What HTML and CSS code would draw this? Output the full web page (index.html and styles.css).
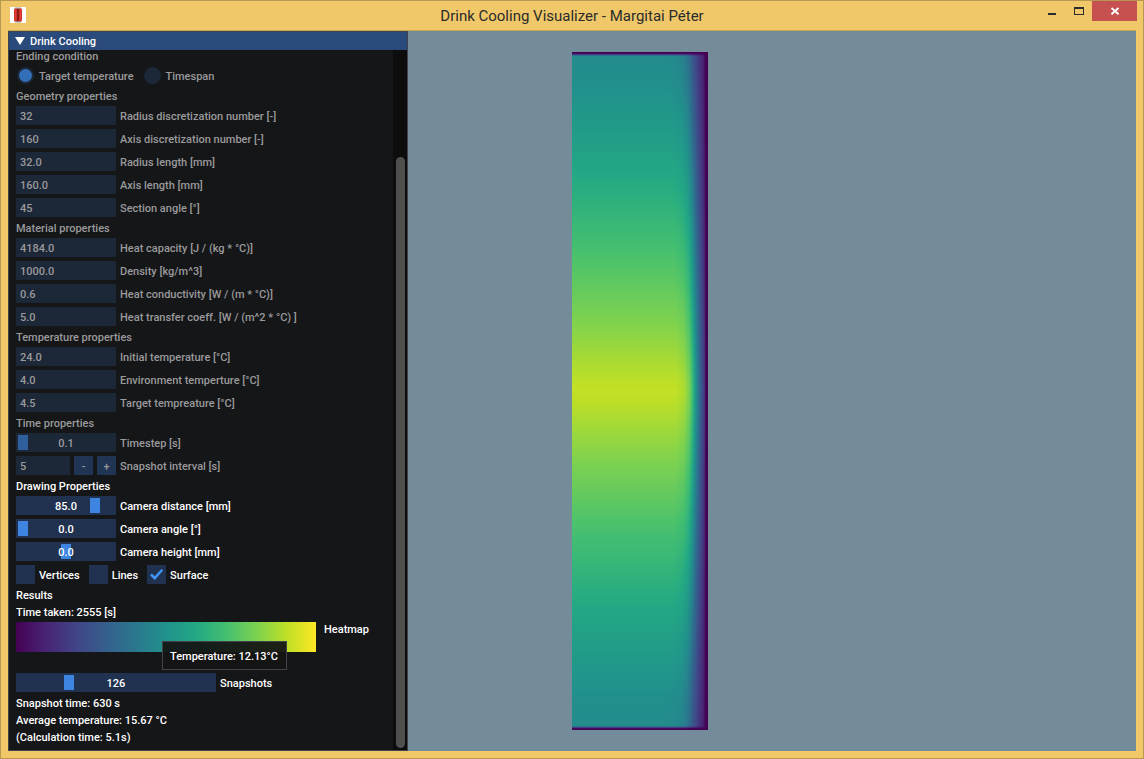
FILE: index.html
```html
<!DOCTYPE html>
<html lang="en">
<head>
<meta charset="utf-8">
<title>Drink Cooling Visualizer - Margitai Péter</title>
<link rel="stylesheet" href="styles.css">
</head>
<body>
<div class="window">
  <header class="titlebar">
    <svg class="app-icon" viewBox="0 0 16 16" aria-hidden="true">
      <rect width="16" height="16" fill="#fff"/>
      <rect x="4" y="1" width="8" height="14" rx="2" fill="#c9342b"/>
      <rect x="5" y="0.5" width="6" height="1.2" fill="#9a9a92"/>
      <rect x="5" y="14.3" width="6" height="1.2" fill="#9a9a92"/>
      <rect x="7" y="2" width="2" height="12" fill="#8f1712"/>
      <rect x="5" y="2" width="1" height="12" fill="#e8392f"/>
      <rect x="10" y="2" width="1" height="12" fill="#e8392f"/>
    </svg>
    <h1 class="window-title">Drink Cooling Visualizer - Margitai Péter</h1>
    <div class="window-buttons">
      <button class="win-btn" type="button" aria-label="Minimize"><svg viewBox="0 0 12 12"><rect x="2" y="8" width="8" height="2" fill="#2b2b2b"/></svg></button>
      <button class="win-btn" type="button" aria-label="Maximize"><svg viewBox="0 0 12 12" shape-rendering="crispEdges"><path d="M1 2h10v8H1zM2 4v5h8V4z" fill="#2b2b2b" fill-rule="evenodd"/></svg></button>
      <button class="win-btn close" type="button" aria-label="Close"><svg viewBox="0 0 12 12"><path d="M2.500 3L9.500 9.200M9.500 3L2.500 9.200" stroke="#fff" stroke-width="1.900"/></svg></button>
    </div>
  </header>
  <main class="client">
    <section class="panel">
      <h2 class="panel-title"><svg class="arrow" viewBox="0 0 10 8" aria-hidden="true"><path d="M0 0h10L5 8z" fill="#fff"/></svg>Drink Cooling</h2>
      <div class="panel-body">
        <form class="content">
          <fieldset class="group" disabled>
            <h3 class="line">Ending condition</h3>
            <div class="choices">
              <label class="choice"><input class="radio" type="radio" name="ending" checked><span>Target temperature</span></label>
              <label class="choice"><input class="radio" type="radio" name="ending"><span>Timespan</span></label>
            </div>
            <h3 class="line">Geometry properties</h3>
            <div class="row"><input class="field" id="rn" value="32"><label for="rn">Radius discretization number [-]</label></div>
            <div class="row"><input class="field" id="an" value="160"><label for="an">Axis discretization number [-]</label></div>
            <div class="row"><input class="field" id="rl" value="32.0"><label for="rl">Radius length [mm]</label></div>
            <div class="row"><input class="field" id="al" value="160.0"><label for="al">Axis length [mm]</label></div>
            <div class="row"><input class="field" id="sa" value="45"><label for="sa">Section angle [°]</label></div>
            <h3 class="line">Material properties</h3>
            <div class="row"><input class="field" id="hc" value="4184.0"><label for="hc">Heat capacity [J / (kg * °C)]</label></div>
            <div class="row"><input class="field" id="de" value="1000.0"><label for="de">Density [kg/m^3]</label></div>
            <div class="row"><input class="field" id="co" value="0.6"><label for="co">Heat conductivity [W / (m * °C)]</label></div>
            <div class="row"><input class="field" id="tc" value="5.0"><label for="tc">Heat transfer coeff. [W / (m^2 * °C) ]</label></div>
            <h3 class="line">Temperature properties</h3>
            <div class="row"><input class="field" id="it" value="24.0"><label for="it">Initial temperature [°C]</label></div>
            <div class="row"><input class="field" id="et" value="4.0"><label for="et">Environment temperture [°C]</label></div>
            <div class="row"><input class="field" id="tt" value="4.5"><label for="tt">Target tempreature [°C]</label></div>
            <h3 class="line">Time properties</h3>
            <div class="row"><span class="slider"><input class="range" id="ts" type="range" min="0.1" max="10" step="0.1" value="0.1"><output for="ts">0.1</output></span><label for="ts">Timestep [s]</label></div>
            <div class="row"><span class="stepper"><input class="field" id="si" value="5"><button class="step" type="button" aria-label="Decrease">-</button><button class="step" type="button" aria-label="Increase">+</button></span><label for="si">Snapshot interval [s]</label></div>
          </fieldset>
          <fieldset class="group">
            <h3 class="line">Drawing Properties</h3>
            <div class="row"><span class="slider"><input class="range" id="cd" type="range" min="10" max="100" value="85"><output for="cd">85.0</output></span><label for="cd">Camera distance [mm]</label></div>
            <div class="row"><span class="slider"><input class="range" id="ca" type="range" min="0" max="360" value="0"><output for="ca">0.0</output></span><label for="ca">Camera angle [°]</label></div>
            <div class="row"><span class="slider"><input class="range" id="ch" type="range" min="-100" max="100" value="0"><output for="ch">0.0</output></span><label for="ch">Camera height [mm]</label></div>
            <div class="choices">
              <label class="choice"><input class="check" type="checkbox"><span>Vertices</span></label>
              <label class="choice"><input class="check" type="checkbox"><span>Lines</span></label>
              <label class="choice"><input class="check" type="checkbox" checked><span>Surface</span></label>
            </div>
          </fieldset>
          <section class="group">
            <h3 class="line">Results</h3>
            <p class="line">Time taken: 2555 [s]</p>
            <div class="heatmap-row">
              <div class="heatmap"><div class="tooltip" role="tooltip">Temperature: 12.13°C</div></div>
              <span class="line">Heatmap</span>
            </div>
            <div class="row snapshots"><span class="slider wide"><input class="range" id="sn" type="range" min="0" max="511" value="126"><output for="sn">126</output></span><label for="sn">Snapshots</label></div>
            <p class="line">Snapshot time: 630 s</p>
            <p class="line">Average temperature: 15.67 °C</p>
            <p class="line">(Calculation time: 5.1s)</p>
          </section>
        </form>
        <div class="scrollbar"><div class="thumb"></div></div>
      </div>
    </section>
    <section class="viewport">
      <canvas class="section-plot" id="plot" width="136" height="678"></canvas>
    </section>
  </main>
</div>
<script src="plot.js"></script>
</body>
</html>
```
FILE: styles.css
```css
* { box-sizing: border-box; }

body {
  margin: 0;
  font: 500 11px/13px Roboto, "Liberation Sans", sans-serif;
  color: #fff;
}

h1, h2, h3, p, fieldset { margin: 0; padding: 0; border: 0; font: inherit; min-width: 0; }

.window {
  display: flex;
  flex-direction: column;
  min-height: 100vh;
  padding: 0 7px 7px;
  background: #f0c869;
  border: 1px solid #b79850;
}

.titlebar {
  display: grid;
  grid-template-columns: 1fr auto 1fr;
  align-items: start;
  height: 29px;
}

.app-icon { width: 16px; height: 16px; margin: 6px 0 0 2px; }

.window-title {
  font: 400 15px/31px Roboto, "Open Sans", sans-serif;
  height: 29px;
  color: #2b2b2b;
}

.window-buttons { display: flex; justify-content: flex-end; margin-right: -1px; }

.win-btn {
  display: grid;
  place-items: center;
  width: 27px;
  height: 20px;
  padding: 0;
  border: 0;
  background: none;
}
.win-btn svg { width: 12px; height: 12px; }
.win-btn.close { width: 45px; background: #c75050; }

.client {
  flex: 1;
  display: flex;
  border-top: 1px solid #c9a558;
  background: #748c99;
}

.panel {
  display: flex;
  flex-direction: column;
  width: 400px;
  background: #151618;
  border: 1px solid #41434c;
}

.panel-title {
  display: flex;
  align-items: center;
  gap: 5px;
  height: 18px;
  padding-left: 6px;
  background: #294a7a;
}
.arrow { width: 10px; height: 8px; }

.panel-body { flex: 1; display: flex; }

.content { flex: 1; margin-top: -1px; padding: 0 7px 6px; }

.group { display: flex; flex-direction: column; gap: 4px; }
.group + .group { margin-top: 4px; }
.group:disabled { color: #9a9a9c; }

.line { height: 13px; line-height: 15px; white-space: nowrap; }

.row, .choices, .choice, .stepper { display: flex; align-items: center; gap: 4px; height: 19px; }
.choices { gap: 9px; }
.row label, .choice span { padding-top: 2px; white-space: nowrap; }

.field {
  width: 100px;
  height: 19px;
  padding: 2px 4px 0;
  border: 0;
  background: #213250;
  color: inherit;
  font: inherit;
}
:disabled .field, :disabled .slider { background: #1c2737; }

.stepper { width: 100px; }
.stepper .field { flex: 1; min-width: 0; }
.step {
  width: 19px;
  height: 19px;
  padding: 2px 0 0;
  border: 0;
  background: #203453;
  color: inherit;
  font: inherit;
}

.slider {
  display: grid;
  width: 100px;
  height: 19px;
  padding: 2px;
  background: #213250;
}
.slider.wide { width: 200px; }
.slider > * { grid-area: 1 / 1; }
.slider output { place-self: center; padding-top: 2px; pointer-events: none; z-index: 1; }
.range {
  appearance: none;
  width: 100%;
  height: 15px;
  margin: 0;
  background: none;
}
.range::-webkit-slider-thumb {
  appearance: none;
  width: 10px;
  height: 15px;
  background: #3d85e0;
}
.range:disabled::-webkit-slider-thumb { background: #2f609d; }

.radio, .check {
  appearance: none;
  display: grid;
  place-items: center;
  width: 19px;
  height: 19px;
  margin: 0;
  background: #213250;
}
.radio { border: 1px solid #151618; border-radius: 50%; background: #1c2737; }
.radio:checked::before {
  content: "";
  width: 13px;
  height: 13px;
  border-radius: 50%;
  background: #336fb8;
}
.check:checked::before {
  content: "";
  width: 13px;
  height: 11px;
  background: #4296fa;
  clip-path: polygon(0 58%, 13% 42%, 36% 66%, 87% 0, 100% 14%, 36% 100%);
}

.heatmap-row { display: flex; gap: 8px; height: 30px; }
.heatmap {
  position: relative;
  width: 300px;
  background: linear-gradient(90deg, #440154, #482475, #414487, #355f8d, #2a788e, #21918c, #22a884, #44bf70, #7ad151, #bddf26, #fde725);
}
.tooltip {
  position: absolute;
  left: 146px;
  top: 19px;
  padding: 8px 8px 6px 7px;
  border: 1px solid #43434b;
  background: rgba(20, 20, 20, 0.94);
  white-space: nowrap;
}
.snapshots { margin-top: 17px; }

.scrollbar {
  display: flex;
  width: 14px;
  padding: 107px 2px 2px 3px;
  background: #0d0d0e;
}
.thumb { flex: 1; border-radius: 5px; background: #4f4f4f; }

.viewport {
  flex: 1;
  display: flex;
  align-items: center;
  padding-left: calc(50vw - 408px);
}
.section-plot { aspect-ratio: 136 / 678; width: 136px; }
```
FILE: plot.js
```javascript
const canvas = document.getElementById("plot");
const ctx = canvas.getContext("2d");
const W = canvas.width;
const H = canvas.height;

const viridis = [
  [68, 1, 84], [72, 36, 117], [65, 68, 135], [53, 95, 141], [42, 120, 142],
  [33, 145, 140], [34, 168, 132], [68, 191, 112], [122, 209, 81],
  [189, 223, 38], [253, 231, 37]
];

// Normalized temperature along the axis, by distance from the middle
const axial = [[0, 0.91], [0.04, 0.895], [0.2, 0.81], [0.38, 0.72], [0.55, 0.64], [0.71, 0.57], [0.9, 0.495], [1, 0.475]];
// Share of the inner temperature left, by pixels from the outer wall
const radial = [[0, 0], [2, 0.03], [3, 0.17], [6, 0.3], [9, 0.43], [12, 0.59], [15, 0.76], [18, 0.88], [23, 0.96], [32, 1]];
// The same for the top and bottom faces
const faces = [[0, 0], [1, 0.05], [2, 0.4], [3, 0.75], [4, 1]];

function sample(table, x) {
  for (let i = 1; i < table.length; i++) {
    const [x0, y0] = table[i - 1];
    const [x1, y1] = table[i];
    if (x <= x1) return y0 + (y1 - y0) * (x - x0) / (x1 - x0);
  }
  return table[table.length - 1][1];
}

const image = ctx.createImageData(W, H);
for (let y = 0; y < H; y++) {
  const d = Math.abs(y + 0.5 - H / 2) / (H / 2);
  const rowHeat = sample(axial, d) * sample(faces, Math.min(y, H - 1 - y));
  // The cold layer at the wall is thicker near the two ends
  const layer = 1 + 0.25 * d * d;
  for (let x = 0; x < W; x++) {
    const t = rowHeat * sample(radial, (W - 1 - x) / layer) * 10;
    const k = Math.min(9, Math.floor(t));
    const p = (y * W + x) * 4;
    for (let c = 0; c < 3; c++) {
      image.data[p + c] = viridis[k][c] + (viridis[k + 1][c] - viridis[k][c]) * (t - k);
    }
    image.data[p + 3] = 255;
  }
}
ctx.putImageData(image, 0, 0);
```
